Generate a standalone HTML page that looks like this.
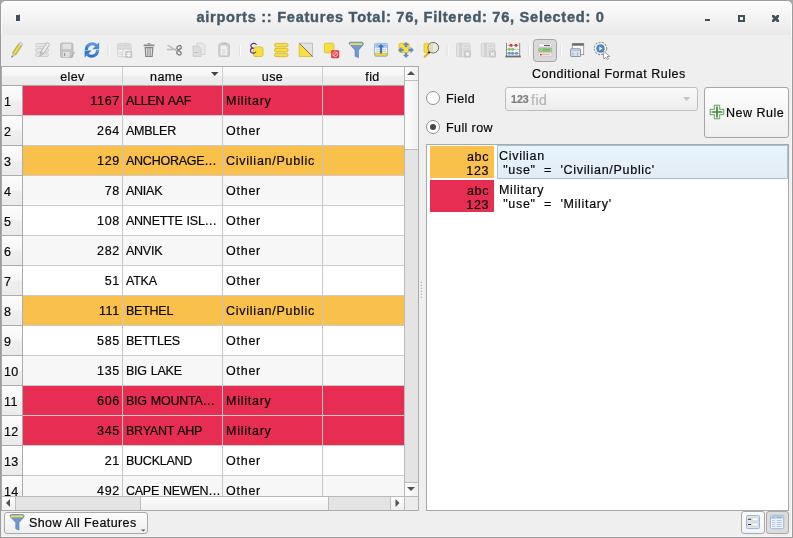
<!DOCTYPE html>
<html><head><meta charset="utf-8">
<style>
*{margin:0;padding:0;box-sizing:border-box}
html,body{width:793px;height:538px;overflow:hidden;background:#a8a8a8}
body{font-family:"Liberation Sans",sans-serif;font-size:12.5px;color:#080808;position:relative;letter-spacing:0.4px;-webkit-text-stroke:0.2px currentColor}
.a{position:absolute}
#win{left:0;top:0;width:793px;height:538px;background:#efefef;border:1px solid #9c9c9c;border-radius:6px 6px 0 0;overflow:hidden;box-shadow:inset -1px -1px 0 #f5f5f5}
#title{left:0;top:0;width:791px;height:34px;background:linear-gradient(#fdfdfd,#e9e9e9);border-radius:5px 5px 0 0;box-shadow:inset 0 1px 0 #fff,inset 1px 0 0 #fbfbfb,inset -1px 0 0 #fbfbfb}
#ttext{left:5px;top:9px;width:791px;text-align:center;font-weight:bold;font-size:14.6px;color:#465a68;white-space:nowrap;letter-spacing:0.72px;-webkit-text-stroke:0.4px #465a68}
#tbl{left:0;top:65px;width:418px;height:445px;border:1px solid #acacac;background:#fff;overflow:hidden}
#vp{left:0;top:0;width:402px;height:429px;overflow:hidden;background:#fff}
.hdr{position:absolute;top:0;height:19px;background:linear-gradient(#fbfbfb 0%,#f6f6f6 45%,#eeeeee 55%,#ebebeb 100%);border-bottom:1px solid #a9a9a9;text-align:center;line-height:21px}
.hs{border-right:1px solid #cfcfcf}
.row{left:0;height:30px;width:420px}
.c{position:absolute;top:0;height:30px;border-right:1px solid #c6c6c6;border-bottom:1px solid #cbcbcb;line-height:31px;white-space:nowrap;overflow:hidden}
.rh{left:0;width:21px;background:linear-gradient(#fcfcfc 0%,#f7f7f7 45%,#efefef 55%,#ebebeb 100%);border-right:1px solid #acacac;border-bottom:1px solid #acacac;padding-left:2px;line-height:32px}
.e{left:21px;width:100px;text-align:right;padding-right:2px;letter-spacing:0.7px}
.n{left:121px;width:100px;padding-left:3px;letter-spacing:-0.25px;word-spacing:0.8px}
.u{left:221px;width:100px;padding-left:3px;letter-spacing:0.75px}
.f{left:321px;width:100px}
.red{background:#e72d52}
.org{background:#f9c04c}
.alt{background:#f7f7f7}
.wht{background:#fff}
#vs{left:402px;top:0;width:14px;height:443px;background:#e4e4e4;border-left:1px solid #b9b9b9}
#hs{left:0;top:429px;width:402px;height:14px;background:#e4e4e4;border-top:1px solid #b9b9b9}
.sb{position:absolute;background:linear-gradient(90deg,#fefefe,#efefef)}
.sbh{position:absolute;background:linear-gradient(#fefefe,#efefef)}
#corner{left:402px;top:429px;width:14px;height:14px;background:#ececec;border-left:1px solid #b9b9b9;border-top:1px solid #b9b9b9}
.lbl{position:absolute;white-space:nowrap;line-height:14px}
.radio{position:absolute;width:14px;height:14px;border-radius:50%;border:1px solid #8f8f8f;background:#fff}
#combo{left:505px;top:87px;width:193px;height:24px;border:1px solid #bdbdbd;border-radius:3px;background:linear-gradient(#fafafa,#ececec)}
#newrule{left:704px;top:87px;width:85px;height:51px;border:1px solid #a6a6a6;border-radius:3px;background:linear-gradient(#fdfdfd,#efefef)}
#list{left:426px;top:144px;width:363px;height:367px;border:1px solid #a9a9a9;background:#fff}
.sw{position:absolute;width:64px;height:32px;text-align:right;padding-right:5px;line-height:14px;padding-top:4px;letter-spacing:0.6px}
#sel{left:70px;top:0px;width:291px;height:34px;border:1px solid #a6c0d6;background:linear-gradient(#e8f4fd,#e2ecf5)}
.btn{position:absolute;border:1px solid #a9a9a9;border-radius:3px;background:linear-gradient(#fdfdfd,#efefef)}

</style></head><body>
<div id="root" style="position:absolute;left:0;top:0;width:793px;height:538px;will-change:transform">
<div id="win" class="a"><div id="title" class="a"></div></div>
<div id="ttext" class="a">airports :: Features Total: 76, Filtered: 76, Selected: 0</div>
<div id="tbl" class="a" style="left:1px;top:66px">
  <div id="vp" class="a">
    <div class="hdr hs" style="left:0;width:121px;padding-left:21px">elev</div>
    <div class="hdr hs" style="left:121px;width:100px;padding-right:12px">name</div>
    <div class="hdr hs" style="left:221px;width:100px">use</div>
    <div class="hdr hs" style="left:321px;width:100px">fid</div>
    <div class="a row" style="top:19px"><div class="c rh">1</div><div class="c e red">1167</div><div class="c n red">ALLEN AAF</div><div class="c u red">Military</div><div class="c f red"></div></div>
<div class="a row" style="top:49px"><div class="c rh">2</div><div class="c e alt">264</div><div class="c n alt">AMBLER</div><div class="c u alt">Other</div><div class="c f alt"></div></div>
<div class="a row" style="top:79px"><div class="c rh">3</div><div class="c e org">129</div><div class="c n org">ANCHORAGE…</div><div class="c u org">Civilian/Public</div><div class="c f org"></div></div>
<div class="a row" style="top:109px"><div class="c rh">4</div><div class="c e alt">78</div><div class="c n alt">ANIAK</div><div class="c u alt">Other</div><div class="c f alt"></div></div>
<div class="a row" style="top:139px"><div class="c rh">5</div><div class="c e wht">108</div><div class="c n wht">ANNETTE ISL…</div><div class="c u wht">Other</div><div class="c f wht"></div></div>
<div class="a row" style="top:169px"><div class="c rh">6</div><div class="c e alt">282</div><div class="c n alt">ANVIK</div><div class="c u alt">Other</div><div class="c f alt"></div></div>
<div class="a row" style="top:199px"><div class="c rh">7</div><div class="c e wht">51</div><div class="c n wht">ATKA</div><div class="c u wht">Other</div><div class="c f wht"></div></div>
<div class="a row" style="top:229px"><div class="c rh">8</div><div class="c e org">111</div><div class="c n org">BETHEL</div><div class="c u org">Civilian/Public</div><div class="c f org"></div></div>
<div class="a row" style="top:259px"><div class="c rh">9</div><div class="c e wht">585</div><div class="c n wht">BETTLES</div><div class="c u wht">Other</div><div class="c f wht"></div></div>
<div class="a row" style="top:289px"><div class="c rh">10</div><div class="c e alt">135</div><div class="c n alt">BIG LAKE</div><div class="c u alt">Other</div><div class="c f alt"></div></div>
<div class="a row" style="top:319px"><div class="c rh">11</div><div class="c e red">606</div><div class="c n red">BIG MOUNTA…</div><div class="c u red">Military</div><div class="c f red"></div></div>
<div class="a row" style="top:349px"><div class="c rh">12</div><div class="c e red">345</div><div class="c n red">BRYANT AHP</div><div class="c u red">Military</div><div class="c f red"></div></div>
<div class="a row" style="top:379px"><div class="c rh">13</div><div class="c e wht">21</div><div class="c n wht">BUCKLAND</div><div class="c u wht">Other</div><div class="c f wht"></div></div>
<div class="a row" style="top:409px"><div class="c rh">14</div><div class="c e alt">492</div><div class="c n alt">CAPE NEWEN…</div><div class="c u alt">Other</div><div class="c f alt"></div></div>
  </div>
  <div id="vs" class="a">
    <div class="sb" style="left:0;top:0;width:13px;height:14px;border-bottom:1px solid #bdbdbd"></div>
    <div class="sb" style="left:0;top:14px;width:13px;height:69px;border-bottom:1px solid #bdbdbd"></div>
    <div class="sb" style="left:0;top:415px;width:13px;height:14px;border-top:1px solid #bdbdbd"></div>
  </div>
  <div id="hs" class="a">
    <div class="sbh" style="left:0;top:0;width:14px;height:13px;border-right:1px solid #bdbdbd"></div>
    <div class="sbh" style="left:138px;top:0;width:189px;height:13px;border-left:1px solid #bdbdbd;border-right:1px solid #bdbdbd"></div>
    <div class="sbh" style="left:388px;top:0;width:14px;height:13px;border-left:1px solid #bdbdbd"></div>
  </div>
  <div id="corner" class="a"></div>
</div>
<div class="lbl" style="left:532px;top:67px;letter-spacing:0.53px">Conditional Format Rules</div>
<div class="radio" style="left:426px;top:91px"></div>
<div class="radio" style="left:426px;top:120px"><div class="a" style="left:3px;top:3px;width:6px;height:6px;border-radius:50%;background:#474747"></div></div>
<div class="lbl" style="left:446px;top:92px">Field</div>
<div class="lbl" style="left:446px;top:121px">Full row</div>
<div id="combo" class="a"></div>
<div class="lbl" style="left:511px;top:92px;font-weight:bold;font-size:10.6px;color:#7c7c7c;letter-spacing:0">123</div>
<div class="lbl" style="left:531px;top:93px;color:#b4b4b4;font-size:14px;letter-spacing:0.5px">fid</div>
<div id="newrule" class="a"></div>
<div class="lbl" style="left:726px;top:105.5px;letter-spacing:0.5px">New Rule</div>
<div id="list" class="a">
  <div id="sel" class="a"></div>
  <div class="sw org" style="left:3px;top:1px">abc<br>123</div>
  <div class="sw red" style="left:3px;top:35px">abc<br>123</div>
  <div class="lbl" style="left:72px;top:3.5px;white-space:pre;letter-spacing:0.7px">Civilian
 "use"  =  'Civilian/Public'</div>
  <div class="lbl" style="left:72px;top:37.5px;white-space:pre;letter-spacing:0.7px">Military
 "use"  =  'Military'</div>
</div>
<div class="btn" style="left:4px;top:512px;width:144px;height:22px"></div>
<div class="lbl" style="left:29px;top:516px">Show All Features</div>
<div class="btn" style="left:741px;top:511px;width:24px;height:23px;background:linear-gradient(#fdfdfd,#f2f2f2)"></div>
<div class="btn" style="left:766px;top:511px;width:23px;height:23px;background:#dcdcdc"></div>
<svg class="a" style="left:0;top:0" width="793" height="538" viewBox="0 0 793 538">
<!-- title bar icon -->
<path d="M15.5 13.5h3.5l1.5-1v9h-5z" fill="#fff"/>
<path d="M16 15h3l1-1v7h-4z" fill="#3e5259"/>
<!-- window controls -->
<rect x="705" y="19" width="5" height="2" fill="#3e5259"/>
<path d="M738 15h7v7h-7z M740 17v3h3v-3z" fill="#3e5259" fill-rule="evenodd"/>
<path d="M772 15h2l1.5 1.5 1.5-1.5h2v2l-1.5 1.5 1.5 1.5v2h-2l-1.5-1.5-1.5 1.5h-2v-2l1.5-1.5-1.5-1.5z" fill="#3e5259"/>
<!-- 1 pencil -->
<g transform="translate(16.5,50.3) rotate(34) scale(1,1.06)">
 <rect x="-1.9" y="-6" width="3.8" height="10" fill="#d8c73a" stroke="#a59a2a" stroke-width="0.6"/>
 <rect x="-0.5" y="-6" width="1" height="10" fill="#f0e479"/>
 <rect x="-1.9" y="-8.3" width="3.8" height="2.3" fill="#dcdcdc" stroke="#b0b0b0" stroke-width="0.5"/>
 <path d="M-1.9 4h3.8L0 8.6z" fill="#c4c4c4"/>
 <path d="M-0.8 6.6h1.6L0 8.6z" fill="#666"/>
</g>
<!-- 2 edit multiple (disabled) -->
<g fill="#e4e4e4" stroke="#cfcfcf" stroke-width="1">
 <rect x="35.5" y="43.5" width="13" height="3.5" rx="1.5"/>
 <rect x="35.5" y="48.5" width="13" height="3.5" rx="1.5"/>
 <rect x="35.5" y="53" width="13" height="3.5" rx="1.5"/>
</g>
<g transform="translate(44.3,49.5) rotate(34)">
 <rect x="-1.6" y="-7.5" width="3.2" height="11.5" fill="#ececec" stroke="#a9a9a9" stroke-width="0.7"/>
 <path d="M-1.6 4h3.2L0 8.3z" fill="#c8c8c8" stroke="#a9a9a9" stroke-width="0.5"/>
</g>
<!-- 3 save (disabled) -->
<path d="M60.5 44.5q0-1.5 1.5-1.5h9.5q1.5 0 1.5 1.5v11.5q0 1.5-1.5 1.5h-9.5q-1.5 0-1.5-1.5z" fill="#c4c4c4" stroke="#b4b4b4" stroke-width="0.8"/>
<rect x="62.5" y="43.8" width="8.5" height="5.2" fill="#e2e2e2"/>
<rect x="63" y="52" width="6.5" height="5.3" fill="#e0e0e0"/>
<rect x="64" y="53" width="1.3" height="3" fill="#9a9a9a"/>
<path d="M69.5 57.8l4.6-6.2 1 0.7-4.4 6z" fill="#b0b0b0"/>
<!-- 4 refresh -->
<defs><linearGradient id="bl" x1="0" y1="0" x2="0" y2="1"><stop offset="0" stop-color="#5b9be0"/><stop offset="1" stop-color="#2f71c4"/></linearGradient></defs>
<g fill="none" stroke="url(#bl)" stroke-width="3">
 <path d="M86.3 50A6 6 0 0 1 96.3 45.3"/>
 <path d="M97.6 50A6 6 0 0 1 87.6 54.7"/>
</g>
<path d="M99.2 42.3v7h-7z" fill="#4d8ad6"/>
<path d="M84.6 57.6v-7h7z" fill="#3777c8"/>
<!-- separators -->
<g fill="#fcfcfc"><rect x="108.5" y="45" width="1" height="11"/><rect x="240" y="45" width="1" height="11"/><rect x="447.5" y="45" width="1" height="11"/><rect x="529" y="45" width="1" height="11"/><rect x="561" y="45" width="1" height="11"/></g>
<g fill="#e2e2e2"><rect x="107.5" y="45" width="1" height="11"/><rect x="239" y="45" width="1" height="11"/><rect x="446.5" y="45" width="1" height="11"/><rect x="528" y="45" width="1" height="11"/><rect x="560" y="45" width="1" height="11"/></g>
<!-- 5 new table (disabled) -->
<rect x="117.6" y="43.4" width="13.4" height="13.4" rx="1.6" fill="#f0f0f0" stroke="#cdcdcd" stroke-width="0.9"/>
<rect x="118" y="43.8" width="12.6" height="3.2" fill="#dedede"/>
<g stroke="#c8c8c8" stroke-width="0.8"><path d="M119.2 45.4h2.6M123.2 45.4h6"/></g>
<rect x="116.6" y="47.3" width="15.4" height="2.4" rx="1" fill="#d6d6d6"/>
<g stroke="#cdcdcd" stroke-width="0.8"><path d="M119 52.4h3M119 54.4h3M122.6 49.8v6.6"/></g>
<rect x="125.2" y="51" width="7" height="7" rx="1" fill="#c6c6c6"/>
<path d="M128.7 52.2v4.6M126.7 53.3l4 2.3M126.7 55.6l4-2.3" stroke="#f8f8f8" stroke-width="1.1"/>
<!-- 6 trash -->
<rect x="143.6" y="44.6" width="10.8" height="1.6" rx="0.5" fill="#8a8a8a"/>
<rect x="147.5" y="43" width="3" height="1.6" rx="0.4" fill="#9a9a9a"/>
<path d="M145.2 47.6h7.6l-0.6 8.9h-6.4z" fill="#dedede" stroke="#858585" stroke-width="1.2"/>
<g stroke="#8a8a8a" stroke-width="1"><path d="M147.9 48.3v7.6M150.1 48.3v7.6"/></g>
<!-- 7 scissors -->
<g stroke="#bcbcbc" stroke-width="1.4" stroke-linecap="round"><path d="M168 45.4L175 49.6M167.3 49.5h7.7"/></g>
<g fill="none" stroke="#808080" stroke-width="1.3">
 <ellipse cx="179.1" cy="47.6" rx="2.3" ry="1.8" transform="rotate(-30 179.1 47.6)"/>
 <ellipse cx="179" cy="52.9" rx="2.3" ry="1.9" transform="rotate(40 179 52.9)"/>
</g>
<path d="M175 49.6l2.2-1.2M175 49.6l2.6 2.2" stroke="#a0a0a0" stroke-width="1"/>
<!-- 8 copy (disabled) -->
<path d="M197 43h5.5l2.5 2.5v9h-8z" fill="#e8e8e8" stroke="#cfcfcf" stroke-width="0.8"/>
<path d="M193 46h5.5l2.5 2.5v8h-8z" fill="#dcdcdc" stroke="#c9c9c9" stroke-width="0.8"/>
<rect x="194.5" y="52" width="4" height="1" fill="#c0c0c0"/>
<!-- 9 paste (disabled) -->
<rect x="218.8" y="43.6" width="10.6" height="13" rx="1.6" fill="#d0d0d0" stroke="#bdbdbd" stroke-width="0.8"/>
<path d="M220.6 45.6h5l1.6 1.6v8h-6.6z" fill="#f0f0f0"/>
<g stroke="#cfcfcf" stroke-width="0.8"><path d="M222 50h4M222 52h4M222 54h3"/></g>
<rect x="221.5" y="42.4" width="5.2" height="2" rx="0.5" fill="#bdbdbd"/>
<!-- 10 expression select -->
<rect x="253.5" y="47" width="9.5" height="9.5" rx="1.5" fill="#f6df3e" stroke="#d9b92c" stroke-width="0.8"/>
<path d="M256.5 44.8q-1-1.6-2.8-1.4q-3.2 0.4-2.8 2.8q0.2 1.3 1.8 1.9q-2.3 0.4-2.3 2.6q0.2 2.6 3.4 2.4q1.5-0.2 2.3-1.3" fill="none" stroke="#5e2a7e" stroke-width="1.1"/>
<!-- 11 select all -->
<g fill="#f6df3e" stroke="#d2b02a" stroke-width="0.8">
 <rect x="274.5" y="43.4" width="13.5" height="3.5" rx="1.6"/>
 <rect x="274.5" y="48.3" width="13.5" height="3.5" rx="1.6"/>
 <rect x="274.5" y="53.2" width="13.5" height="3.5" rx="1.6"/>
</g>
<!-- 12 invert -->
<path d="M299.2 43.2h13.3v13.3z" fill="#e2e2e2" stroke="#b4b4b4" stroke-width="0.8"/>
<path d="M299.2 43.2v13.3h13.3z" fill="#f6df3e" stroke="#d9b92c" stroke-width="0.8"/>
<path d="M299.5 43.5l13 13" stroke="#6a6a6a" stroke-width="0.9"/>
<!-- 13 deselect -->
<rect x="324.3" y="43.2" width="9.6" height="9.6" rx="1.5" fill="#f6df3e" stroke="#d9b92c" stroke-width="0.8"/>
<rect x="331.2" y="50.2" width="8" height="8" rx="1" fill="#e23a3a"/>
<circle cx="335.2" cy="54.2" r="2.4" fill="none" stroke="#fbe" stroke-width="0.9"/>
<path d="M333.3 56.1l3.8-3.8" stroke="#fff" stroke-width="0.9"/>
<!-- 14 filter -->
<path d="M349 43.5q0-1.3 1.3-1.3h11.6q1.3 0 1.3 1.3v1.2l-4.8 5.5v7.4l-3.3-1.4v-6l-5-5.5z" fill="#6f9ad0" stroke="#4f7fb8" stroke-width="0.7"/>
<rect x="350" y="43.2" width="12.3" height="1.8" fill="#f6df3e"/>
<!-- 15 move selection to top -->
<rect x="374.5" y="43.4" width="13" height="13" rx="1.3" fill="#eef3f9" stroke="#8cb0dc" stroke-width="0.9"/>
<rect x="375" y="43.9" width="12" height="4" fill="#b3cdea"/>
<g stroke="#7ea6d8" stroke-width="0.8"><path d="M376.2 45.6h9.6"/></g>
<g stroke="#b5cbe3" stroke-width="0.8"><path d="M376 49.6h10M376 51.6h10"/></g>
<rect x="375" y="52.9" width="12" height="3.2" fill="#e9c62a"/>
<path d="M376.2 54.5h9.6" stroke="#f7e27a" stroke-width="0.7"/>
<path d="M381 44l-3.2 3.2h2.1v6.3h2.2v-6.3h2.1z" fill="#3f73b4"/>
<!-- 16 pan to selected -->
<rect x="399" y="43.3" width="10.2" height="9.2" rx="1.5" fill="#f6df3e" stroke="#d9b92c" stroke-width="0.8"/>
<g fill="#5b8fcc" stroke="#4a7bb8" stroke-width="0.3">
 <path d="M406 42.2l-2.7 2.9h1.7v2h2v-2h1.7z"/>
 <path d="M406 57.8l-2.7-2.9h1.7v-2h2v2h1.7z"/>
 <path d="M398.4 50l2.9-2.7v1.7h2v2h-2v1.7z"/>
 <path d="M413.6 50l-2.9-2.7v1.7h-2v2h2v1.7z"/>
</g>
<!-- 17 zoom to selected -->
<rect x="424" y="43.3" width="8" height="9.2" rx="1.5" fill="#f6df3e" stroke="#d9b92c" stroke-width="0.8"/>
<path d="M424.2 57.3l5-5" stroke="#e8a81e" stroke-width="2"/>
<path d="M428.4 53.1l1.3-1.3" stroke="#222" stroke-width="2"/>
<circle cx="433.3" cy="47.7" r="5.3" fill="#eeeadc" stroke="#555" stroke-width="0.9"/>
<path d="M433.3 42.8a4.9 4.9 0 0 0 0 9.8z" fill="#ded6b8" opacity="0.7"/>
<!-- 18 new field (disabled) -->
<rect x="456.5" y="43.2" width="13.5" height="13.5" rx="1.5" fill="#e3e3e3" stroke="#cfcfcf" stroke-width="0.9"/>
<rect x="459" y="43" width="3" height="14" fill="#d3d3d3"/>
<g stroke="#cdcdcd" stroke-width="0.9"><path d="M463 46h6M463 49h6M463 52h4"/></g>
<rect x="464" y="50.5" width="7" height="7" rx="1" fill="#c8c8c8"/>
<circle cx="467.5" cy="54" r="2" fill="#f2f2f2"/>
<!-- 19 delete field (disabled) -->
<rect x="481.3" y="43.2" width="13.5" height="13.5" rx="1.5" fill="#e3e3e3" stroke="#cfcfcf" stroke-width="0.9"/>
<rect x="484" y="43" width="3" height="14" fill="#d3d3d3"/>
<g stroke="#cdcdcd" stroke-width="0.9"><path d="M488 46h6M488 49h6M488 52h4"/></g>
<rect x="489" y="50.5" width="7" height="7" rx="1" fill="#c8c8c8"/>
<path d="M490.8 52.3l3.4 3.4M494.2 52.3l-3.4 3.4" stroke="#f4f4f4" stroke-width="1.2"/>
<!-- 20 field calculator -->
<rect x="506.5" y="43.5" width="13" height="12" fill="#f7f7f7"/>
<g stroke="#8a8a8a" stroke-width="1"><path d="M506.5 42.8v14M519.7 42.8v14"/></g>
<rect x="505.3" y="55.6" width="15.5" height="1.8" fill="#6e6e6e"/>
<g stroke="#9a9a9a" stroke-width="0.6"><path d="M507 45.3h12.3M507 49.3h12.3M507 53.3h12.3"/></g>
<g fill="#d83434"><ellipse cx="511" cy="45.3" rx="1.6" ry="1.5"/><ellipse cx="516" cy="45.3" rx="1.6" ry="1.5"/></g>
<g fill="#83c46f"><ellipse cx="509.3" cy="49.3" rx="1.6" ry="1.5"/><ellipse cx="512.6" cy="49.3" rx="1.6" ry="1.5"/></g>
<g fill="#6497cf"><ellipse cx="509.3" cy="53.3" rx="1.6" ry="1.5"/><ellipse cx="512.6" cy="53.3" rx="1.6" ry="1.5"/><ellipse cx="516.5" cy="53.3" rx="1.6" ry="1.5"/></g>
<!-- 21 conditional formatting toggled -->
<rect x="533.5" y="39.5" width="23" height="22" rx="3" fill="#d9d9d9" stroke="#a4a4a4" stroke-width="1"/>
<rect x="538.5" y="43.8" width="13.3" height="3.2" rx="1" fill="#fafafa" stroke="#b5b5b5" stroke-width="0.6"/>
<rect x="544" y="45" width="6" height="0.9" fill="#444"/>
<rect x="538.5" y="48.2" width="13.3" height="3.4" rx="1" fill="#9fd08c" stroke="#78b065" stroke-width="0.6"/>
<rect x="543" y="49.4" width="7" height="1" fill="#6a9e5a"/>
<rect x="538.5" y="53" width="13.3" height="3.4" rx="1" fill="#fafafa" stroke="#b5b5b5" stroke-width="0.6"/>
<rect x="541" y="54.3" width="9" height="0.9" fill="#ee8a8a"/>
<rect x="540" y="54" width="1.5" height="1.4" fill="#c81f1f"/>
<!-- 22 dock -->
<rect x="572.3" y="43.6" width="11.4" height="11" fill="#fbfbfb" stroke="#8d8d8d" stroke-width="0.8"/>
<rect x="572.3" y="43.4" width="11.4" height="2.3" fill="#6a6a6a"/>
<rect x="570.6" y="48.8" width="10" height="7.7" rx="0.6" fill="#d6e2ef" stroke="#888" stroke-width="0.9"/>
<rect x="571.1" y="49.3" width="9" height="1.8" fill="#a9cdf0"/>
<g stroke="#9fbadb" stroke-width="1.1"><path d="M573 52.5v3.2M577.5 52.5v3.2"/></g>
<!-- 23 actions -->
<circle cx="600.5" cy="48.5" r="6.2" fill="#f6f6f6" stroke="#9a9a9a" stroke-width="1.2" stroke-dasharray="2.2 1.1"/>
<circle cx="600.5" cy="48.5" r="3.9" fill="#4f86c6" stroke="#3a6aa3" stroke-width="0.5"/>
<path d="M599.3 46.6v3.9l3.2-1.95z" fill="#fff"/>
<path d="M603.2 50.8l6.6 5.6-2.8 0.2 1.6 2.3-1.2 0.7-1.6-2.3-2 1.7z" fill="#fff" stroke="#777" stroke-width="0.7"/>
<!-- scrollbar arrows -->
<path d="M407 75h8l-4-4z" fill="#505050"/>
<path d="M407 487h8l-4 4z" fill="#505050"/>
<path d="M6 503l4-4v8z" fill="#505050"/>
<path d="M399.5 503l-4-4v8z" fill="#505050"/>
<!-- sort indicator -->
<path d="M211 72h7.5l-3.75 4z" fill="#444"/>
<!-- combo arrow -->
<path d="M683 97h7.5l-3.75 4z" fill="#c4c4c4"/>
<!-- new rule plus -->
<path d="M714.3 105.2h5.4v4.1h4.1v5.4h-4.1v4.1h-5.4v-4.1h-4.1v-5.4h4.1z" fill="#f2f8f1" stroke="#5a9458" stroke-width="0.9"/>
<path d="M717 106.6v10.8M711.6 112h10.8" stroke="#3f8a3c" stroke-width="1.7"/>
<!-- bottom funnel -->
<path d="M10 516q0-1.5 1.5-1.5h11q1.5 0 1.5 1.5v1l-5 5.5v7.5l-3.2-1.3v-6.2l-5.3-5.5z" fill="#6f9ad0" stroke="#4f7fb8" stroke-width="0.7"/>
<rect x="10.8" y="515.4" width="12.4" height="1.9" fill="#f6df3e"/>
<path d="M141 529.5h4.5l-2.25 2z" fill="#555"/>
<!-- bottom right icons -->
<rect x="746.5" y="515.5" width="13" height="13" rx="1" fill="#e3e3e3" stroke="#8fb3de" stroke-width="0.9"/>
<rect x="752" y="517.8" width="6" height="3" rx="0.5" fill="#fff" stroke="#a9c4e4" stroke-width="0.6"/>
<rect x="752" y="523" width="6" height="3" rx="0.5" fill="#fff" stroke="#a9c4e4" stroke-width="0.6"/>
<rect x="748" y="518.8" width="3" height="1" fill="#333"/>
<rect x="748" y="524" width="3" height="1" fill="#333"/>
<rect x="770.5" y="515.3" width="13.2" height="13.4" rx="1.2" fill="#f1f4f8" stroke="#8fb3de" stroke-width="0.9"/>
<rect x="771" y="515.8" width="12.2" height="3" fill="#b9d1ec"/>
<g stroke="#7aa3d6" stroke-width="0.9"><path d="M772.2 517.3h2.4M776.7 517.3h5"/></g>
<g stroke="#a2c0e2" stroke-width="0.9"><path d="M772.2 520.6h2.4M776.7 520.6h5M772.2 522.6h2.4M776.7 522.6h5M772.2 524.6h2.4M776.7 524.6h5M772.2 526.5h2.4M776.7 526.5h5"/></g>
<path d="M775.6 519v9" stroke="#dde6f0" stroke-width="0.7"/>
<!-- splitter -->
<g fill="#fdfdfd"><rect x="421.5" y="282.5" width="1.2" height="1.2"/><rect x="421.5" y="285.5" width="1.2" height="1.2"/><rect x="421.5" y="288.5" width="1.2" height="1.2"/><rect x="421.5" y="291.5" width="1.2" height="1.2"/><rect x="421.5" y="294.5" width="1.2" height="1.2"/><rect x="421.5" y="297.5" width="1.2" height="1.2"/></g>
<g fill="#b3b3b3"><rect x="420.8" y="281.8" width="1.3" height="1.3"/><rect x="420.8" y="284.8" width="1.3" height="1.3"/><rect x="420.8" y="287.8" width="1.3" height="1.3"/><rect x="420.8" y="290.8" width="1.3" height="1.3"/><rect x="420.8" y="293.8" width="1.3" height="1.3"/><rect x="420.8" y="296.8" width="1.3" height="1.3"/></g>

</svg>

</div>
</body></html>
